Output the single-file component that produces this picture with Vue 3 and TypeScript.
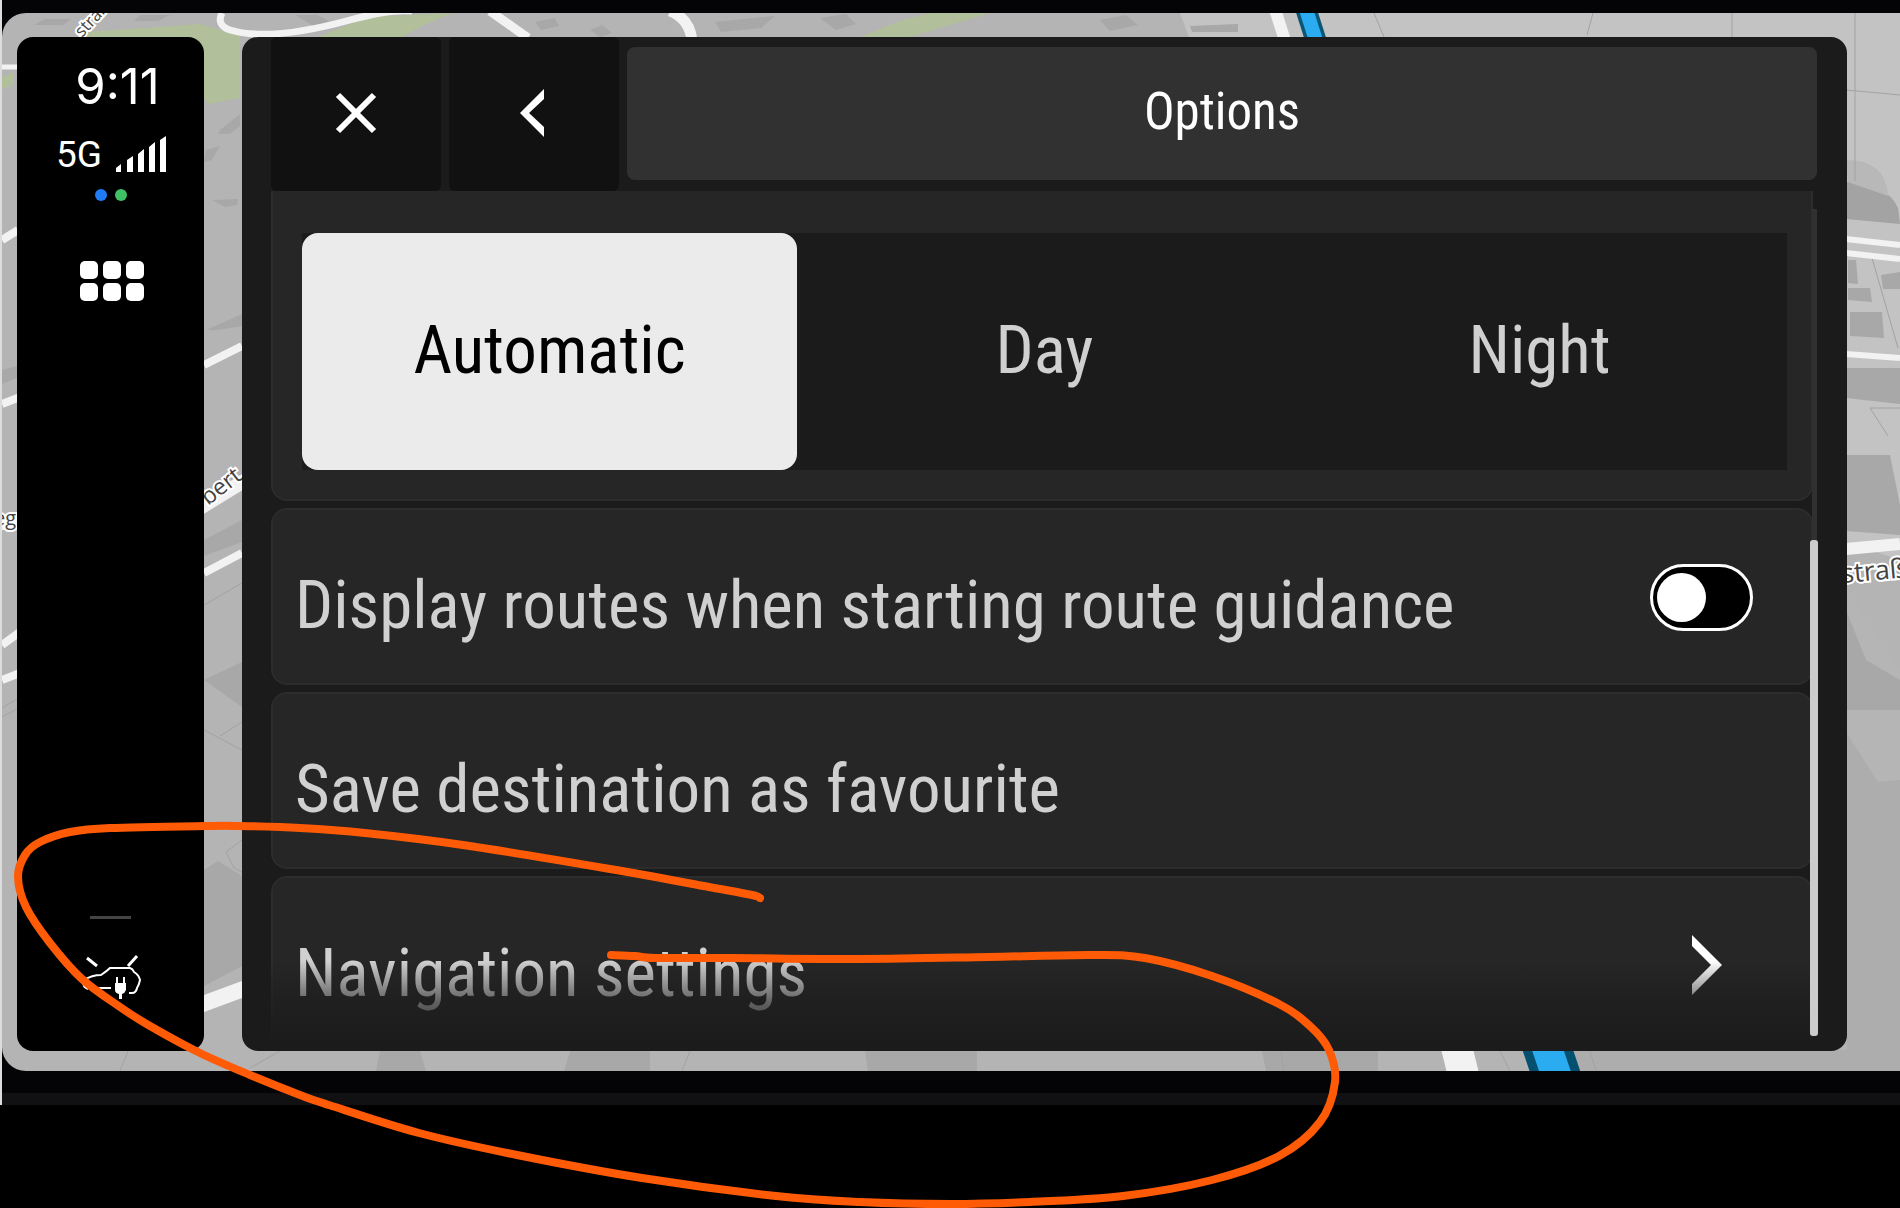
<script setup lang="ts">
import { computed, ref } from 'vue'

type Mode = 'Automatic' | 'Day' | 'Night'
type Point = [number, number]

const modes: Mode[] = ['Automatic', 'Day', 'Night']
const mode = ref<Mode>('Automatic')
const displayRoutes = ref(false)

// Points of the hand-drawn marker line, joined into one smooth curve.
const marker: Point[] = [
  [760, 898], [752, 895], [709, 887], [610, 869], [463, 845], [365, 833], [300, 828], [240, 826],
  [205, 826], [110, 828], [70, 832], [40, 842], [25, 855], [18, 877], [26, 907], [50, 943],
  [82, 979], [120, 1007], [150, 1026], [200, 1053], [250, 1075], [300, 1095], [329, 1105],
  [419, 1133], [517, 1155], [642, 1178], [776, 1196], [860, 1202], [950, 1204], [1030, 1202],
  [1123, 1196], [1212, 1180], [1279, 1156], [1320, 1122], [1335, 1082], [1329, 1050],
  [1311, 1027], [1279, 1004], [1212, 976], [1145, 958], [1092, 955], [989, 957], [860, 959],
  [731, 958], [655, 958], [635, 956], [611, 955],
]

const markerPath = computed(() => {
  const p = marker
  let d = `M${p[0][0]} ${p[0][1]}`
  for (let i = 0; i < p.length - 1; i++) {
    const a = p[Math.max(i - 1, 0)]
    const b = p[i]
    const c = p[i + 1]
    const e = p[Math.min(i + 2, p.length - 1)]
    d += `C${b[0] + (c[0] - a[0]) / 6} ${b[1] + (c[1] - a[1]) / 6} ${c[0] - (e[0] - b[0]) / 6} ${c[1] - (e[1] - b[1]) / 6} ${c[0]} ${c[1]}`
  }
  return d
})
</script>

<template>
  <div class="page">
    <div class="device">
      <main class="screen">
        <svg class="map" viewBox="2 13 1898 1058" preserveAspectRatio="xMidYMid slice" aria-hidden="true">
          <rect x="2" y="13" width="1898" height="1058" fill="#b4b4b4" />
          <path d="M1180 13H1900V560L1840 540V60L1190 40z" fill="#c3c3c3" />
          <path d="M1840 650L1900 740V1071H1560V1050H1847z" fill="#adadad" />
          <path d="M1846 590l54 80v110l-22 2-32-50z" fill="#b5b5b5" />
          <g fill="#b1c09a">
            <path d="M88 32L200 24l40 12v62l-32 6-40-60H88z" />
            <path d="M2 77l12-5v12l-12 5z" />
            <path d="M318 37l50-20 84-4-30 13-20 11z" />
            <path d="M930 13h60l-20 6-60 18h-50l40-16z" />
          </g>
          <g fill="#a8a8a8">
            <path d="M45 19h26l-8 6H34zM140 15h30l-12 6h-24zM220 130l20-16v12l-10 8h-12zM206 150l14-4-8 14-8 2zM212 200l26-1-1 6-12 2z" />
            <path d="M295 15l20 12 14-6-12-6zM535 22l20-4 4 8-18 4zM590 30l12-5 10 8-12 4zM715 22l60-6-14 12-40 4z" />
            <path d="M820 18l26-4 10 10-20 6zM1100 20l26-5 12 10-28 6zM1190 26l48-2v8h-46z" />
            <path d="M206 330l36-16v12l-24 4zM204 540l38-20v22l-38 14zM204 680l38-18v45zM2 370l15-4v12l-15 6z" />
            <path d="M204 870l14-9 24 15v90l-38 20z" />
            <path d="M1848 260h8l2 24-10-1zM1881 275l19-3v17h-17zM1848 288h22l2 14-24-2zM1850 312h32l2 26-34-2z" />
            <path d="M1846 368h54v36l-54-6zM1846 455h44l10 50v30l-54-4zM1846 610l20 50 34 20v30h-54z" />
            <path d="M380 1051h40l6 20h-50zM570 1051h80v20h-86zM865 1051h112v20H868zM1262 1051h116v20h-112z" />
          </g>
          <path d="M1846 182q40 0 52 26l2 16-54-5z" fill="#a3a3a3" />
          <path d="M1846 160q40 0 42 36l-40-14z" fill="#b8b8b8" />
          <g fill="none" stroke="#a2a2a2" stroke-width="1">
            <path d="M1855 13v168M1593 13l-6 22M1732 13v24M1846 90l54 5M1872 258l26 90M1870 408h30M1870 408l18 28" />
            <path d="M204 605l38-22M204 730l38 20M242 722l-22 14M120 1071l8-20M250 1068l30-17M690 1051l-8 20M1280 1051l4 20M1500 1051l10 20M1590 1051l6 20" />
            <path d="M2 708l15-9M2 717l15-8M242 840l-16 12 8 16 8 4M1374 13l10 24" />
          </g>
          <g fill="none" stroke="#f2f2f2">
            <path d="M2 67h16" stroke-width="5" />
            <path d="M222 13q-6 12 8 17 40 12 120-10 40-11 62-9" stroke-width="7" />
            <path d="M490 11l38 27" stroke-width="9" />
            <path d="M670 11q20 8 22 30" stroke-width="11" />
            <path d="M1273 3l14 44" stroke-width="12" />
            <path d="M2 240l16-10M2 404l18-7M204 365l38-19M204 573l38-20M2 645l18-13M2 680l18-7" stroke-width="8" />
            <path d="M200 508l44-27M2 523h16" stroke-width="14" />
            <path d="M200 1005l46-17" stroke-width="16" />
            <path d="M1846 239l54 6M1846 253l54 6M1846 354l54 4" stroke-width="6" />
            <path d="M1846 549l54-5" stroke-width="12" />
            <path d="M1450 1021l20 80" stroke-width="31" />
          </g>
          <path d="M1304 3l14 44" stroke="#0c5575" stroke-width="21" />
          <path d="M1304 3l14 44" stroke="#2bacf0" stroke-width="14" />
          <path d="M1538 1021l27 80" stroke="#05506f" stroke-width="48" />
          <path d="M1538 1021l27 80" stroke="#2bacf0" stroke-width="30" />
          <g class="street-names">
            <text transform="translate(82 38) rotate(-47)" font-size="17">straße</text>
            <text transform="translate(-6 525)" font-size="20">eg</text>
            <text transform="translate(208 506) rotate(-38)" font-size="23">bert</text>
            <text transform="translate(1842 583) rotate(-5)" font-size="27">straße</text>
          </g>
        </svg>

        <aside class="rail">
          <time class="clock">9:11</time>
          <div class="network">
            <span>5G</span>
            <svg width="51" height="36" viewBox="0 0 51 36" fill="#fff" role="img" aria-label="Signal strength">
              <path d="M0 32l5-4v8H0zM11 24l6-4v16h-6zM22 18l6-5v23h-6zM33 11l6-5v30h-6zM44 4l6-4v36h-6z" />
            </svg>
          </div>
          <div class="dots"><i class="dot blue"></i><i class="dot green"></i></div>
          <button class="apps" type="button" aria-label="Apps"><i v-for="n in 6" :key="n"></i></button>
          <hr class="divider" />
          <button class="charge" type="button" aria-label="Charging">
            <svg width="60" height="46" viewBox="0 0 60 46" fill="none" stroke="#fff" stroke-width="2">
              <path d="M6 3l10 8M47 11l9-10" stroke-width="3" />
              <path d="M3 25q8-5 17-5 6-4 9-7h20q3 1 4 4 5 3 6 8-1 5-3 8-1 5-5 5h-3" />
              <path d="M16 37q0-4 4-4h10M3 25q-2 7 4 9" />
              <path d="M34 28h11v7q-1 3-4 4v5h-3v-5q-4-1-4-4z" fill="#fff" stroke="none" />
              <path d="M36 22v7M43 22v7" />
            </svg>
          </button>
        </aside>

        <section class="panel">
          <header class="header">
            <button class="head-button" type="button" aria-label="Close">
              <svg width="42" height="42" viewBox="0 0 42 42" fill="none" stroke="#fff" stroke-width="6">
                <path d="M3 3l36 36M39 3L3 39" />
              </svg>
            </button>
            <button class="head-button" type="button" aria-label="Back">
              <svg width="30" height="48" viewBox="0 0 30 48" fill="#fff">
                <path d="M25 0v10L10 24l15 14v10L1 24z" />
              </svg>
            </button>
            <h1 class="title">Options</h1>
          </header>

          <div class="list">
            <fieldset class="card modes" aria-label="Display mode">
              <div class="segments">
                <label v-for="m in modes" :key="m" class="segment" :class="{ active: m === mode }">
                  <input v-model="mode" type="radio" name="mode" :value="m" />
                  <span>{{ m }}</span>
                </label>
              </div>
            </fieldset>
            <div class="card row">
              <label for="routes">Display routes when starting route guidance</label>
              <input id="routes" v-model="displayRoutes" class="toggle" type="checkbox" role="switch" />
            </div>
            <button class="card row" type="button">Save destination as favourite</button>
            <button class="card row last" type="button">
              <span>Navigation settings</span>
              <svg class="chevron" width="30" height="60" viewBox="0 0 30 60" fill="#fff">
                <path d="M0 0v11l19 19L0 49v11l30-30z" />
              </svg>
            </button>
            <div class="fade"></div>
            <div class="scroll-track"><div class="scroll-thumb"></div></div>
          </div>
        </section>
      </main>
      <div class="bezel"></div>
    </div>
    <svg class="marker" viewBox="0 0 1900 1208" aria-hidden="true">
      <path :d="markerPath" fill="none" stroke="#ff5a05" stroke-width="8" stroke-linecap="round" stroke-linejoin="round" />
    </svg>
  </div>
</template>

<style>
body {
  background: #000;
}
</style>

<style scoped>
.page {
  position: relative;
  min-height: 100vh;
  overflow: hidden;
  background: #000;
  font-family: "Liberation Sans Narrow", "Roboto Condensed", "Liberation Sans", sans-serif;
  color: #fff;
}

.device {
  padding-top: 13px;
  border-left: 2px solid #dcdcdc;
  background: #040407;
}

.screen {
  position: relative;
  display: flex;
  gap: 38px;
  padding: 24px 53px 20px 15px;
  border-radius: 24px 0 0 24px;
  overflow: hidden;
}

.map {
  position: absolute;
  inset: 0;
  width: 100%;
  height: 100%;
}

.street-names {
  font-family: "Open Sans", sans-serif;
  fill: #444;
  stroke: #fff;
  stroke-width: 4px;
  paint-order: stroke;
}

.bezel {
  height: 12px;
  margin-top: 22px;
  background: #111114;
}

.marker {
  position: absolute;
  top: 0;
  left: 0;
  width: 100%;
  pointer-events: none;
}

button {
  border: 0;
  padding: 0;
  font: inherit;
  color: inherit;
  background: none;
}

/* Status rail */
.rail {
  position: relative;
  display: flex;
  flex-direction: column;
  align-items: center;
  box-sizing: border-box;
  width: 187px;
  padding: 20px 0 50px;
  border-radius: 16px;
  background: #000;
}

.clock {
  padding-left: 14px;
  font-family: Inter, sans-serif;
  font-size: 49px;
  line-height: 60px;
}

.network {
  display: flex;
  align-items: center;
  gap: 14px;
  height: 36px;
  margin-top: 19px;
  padding-left: 2px;
  font-family: Roboto, sans-serif;
  font-size: 37px;
}

.dots {
  display: flex;
  gap: 8px;
  margin-top: 17px;
}

.dot {
  width: 12px;
  height: 12px;
  border-radius: 50%;
}

.blue {
  background: #1f7cf5;
}

.green {
  background: #3fbf66;
}

.apps {
  display: grid;
  grid-template-columns: repeat(3, 18px);
  gap: 4px 5px;
  margin-top: 60px;
  padding-left: 2px;
}

.apps i {
  height: 18px;
  border-radius: 5px;
  background: #fff;
}

.divider {
  width: 41px;
  height: 3px;
  margin: auto 0 36px;
  border: 0;
  background: #444;
}

.charge svg {
  display: block;
}

/* Options panel */
.panel {
  position: relative;
  flex: 1;
  min-width: 0;
  padding: 0 30px 0 29px;
  border-radius: 16px;
  overflow: hidden;
  background: #1b1b1b;
}

.header {
  display: flex;
  gap: 8px;
  height: 154px;
}

.head-button {
  display: flex;
  align-items: center;
  justify-content: center;
  width: 170px;
  padding-bottom: 2px;
  border-radius: 6px;
  background: #111;
}

.title {
  flex: 1;
  margin: 10px 0 11px;
  border-radius: 8px;
  background: #313131;
  font-size: 51px;
  font-weight: 400;
  line-height: 130px;
  text-align: center;
}

.list {
  position: relative;
  display: flex;
  flex-direction: column;
  gap: 7px;
  padding-right: 4px;
  color: #d0d0d0;
  font-size: 67px;
}

.card {
  box-sizing: border-box;
  margin: 0;
  border: 2px solid #2c2c2c;
  border-radius: 16px;
  background: #262626;
}

.modes {
  padding: 42px 24px 29px 29px;
  border-top: 0;
  border-radius: 0 0 16px 16px;
}

.segments {
  display: flex;
  background: #1b1b1b;
}

.segment {
  display: flex;
  flex: 1;
  align-items: center;
  justify-content: center;
  box-sizing: border-box;
  height: 237px;
  padding-bottom: 4px;
  border-radius: 16px;
}

.segment.active {
  background: #ebebeb;
  color: #000;
}

.segment input {
  position: absolute;
  opacity: 0;
}

.row {
  display: flex;
  align-items: center;
  justify-content: space-between;
  height: 177px;
  padding: 16px 58px 0 22px;
  text-align: left;
}

.last {
  height: 175px;
  padding-right: 89px;
  border-bottom: 0;
  border-radius: 16px 16px 0 0;
}

.toggle {
  display: flex;
  align-items: center;
  appearance: none;
  box-sizing: border-box;
  width: 103px;
  height: 67px;
  margin: 0 0 14px;
  padding: 0 4px;
  border: 3px solid #fff;
  border-radius: 34px;
  background: #000;
}

.toggle::before {
  content: "";
  width: 49px;
  height: 49px;
  border-radius: 50%;
  background: #fff;
}

.toggle:checked {
  justify-content: flex-end;
}

.chevron {
  margin-bottom: 16px;
}

.fade {
  position: absolute;
  right: 0;
  bottom: 0;
  left: 0;
  height: 90px;
  background: linear-gradient(rgb(27 27 27 / 0), rgb(27 27 27 / 60%) 45%, #1b1b1b);
  pointer-events: none;
}

.scroll-track {
  position: absolute;
  top: 18px;
  right: 0;
  bottom: 15px;
  display: flex;
  align-items: flex-end;
  width: 5px;
  background: #303030;
}

.scroll-thumb {
  flex: none;
  width: 8px;
  height: 60%;
  margin-left: -2px;
  border-radius: 3px;
  background: #cbcbcb;
}
</style>
